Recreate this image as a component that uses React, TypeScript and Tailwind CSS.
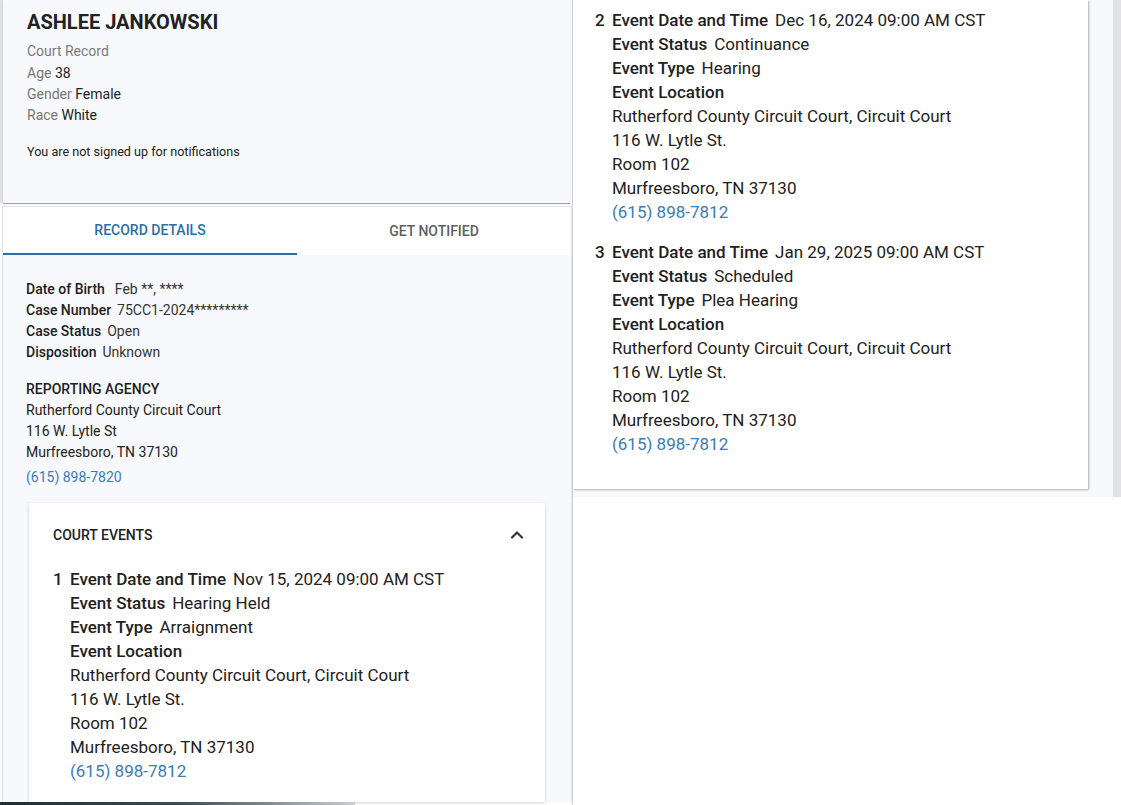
import { ChevronUp } from "lucide-react";

type CourtEvent = {
  n: number;
  date: string;
  status: string;
  type: string;
};

const events: CourtEvent[] = [
  { n: 1, date: "Nov 15, 2024 09:00 AM CST", status: "Hearing Held", type: "Arraignment" },
  { n: 2, date: "Dec 16, 2024 09:00 AM CST", status: "Continuance", type: "Hearing" },
  { n: 3, date: "Jan 29, 2025 09:00 AM CST", status: "Scheduled", type: "Plea Hearing" },
];

function EventItem({ ev }: { ev: CourtEvent }) {
  return (
    <div className="flex text-[17px] leading-[24px] text-[#212121]">
      <div className="w-[17px] shrink-0 font-medium">{ev.n}</div>
      <div className="flex flex-col">
        <div>
          <span className="font-medium">Event Date and Time</span>
          <span className="ml-[7px]">{ev.date}</span>
        </div>
        <div>
          <span className="font-medium">Event Status</span>
          <span className="ml-[7px]">{ev.status}</span>
        </div>
        <div>
          <span className="font-medium">Event Type</span>
          <span className="ml-[7px]">{ev.type}</span>
        </div>
        <div className="font-medium">Event Location</div>
        <div>Rutherford County Circuit Court, Circuit Court</div>
        <div>116 W. Lytle St.</div>
        <div>Room 102</div>
        <div>Murfreesboro, TN 37130</div>
        <div className="text-[#3a7db8]">(615) 898-7812</div>
      </div>
    </div>
  );
}

function DetailRow({ label, value, gap = "ml-[6px]" }: { label: string; value: string; gap?: string }) {
  return (
    <div>
      <span className="font-medium text-[#212121]">{label}</span>
      <span className={`${gap} text-[#333]`}>{value}</span>
    </div>
  );
}

export default function App() {
  return (
    <div className="flex w-[1121px] h-[805px] overflow-hidden bg-white font-['Roboto',sans-serif]">
      {/* left screenshot */}
      <div className="flex w-[572px] shrink-0 flex-col">
        <div className="flex h-[203px] shrink-0">
          <div className="w-[3px] bg-[#e2e2e4]" />
          <div className="w-[567px] bg-[#f8f9fd] px-[24px] pt-[9px] shadow-[0_1px_1px_rgba(0,0,0,0.35)]">
            <h1 className="text-[20px] font-bold leading-[26px] text-[#222]">ASHLEE JANKOWSKI</h1>
            <div className="mt-[6px] text-[14px] leading-[20px] text-[#7a7a7a]">Court Record</div>
            <div className="mt-[2px] text-[14px] leading-[21px]">
              <div>
                <span className="text-[#777]">Age</span> <span className="text-[#212121]">38</span>
              </div>
              <div>
                <span className="text-[#777]">Gender</span> <span className="text-[#212121]">Female</span>
              </div>
              <div>
                <span className="text-[#777]">Race</span> <span className="text-[#212121]">White</span>
              </div>
            </div>
            <div className="mt-[18px] text-[12.6px] leading-[16px] text-[#212121]">You are not signed up for notifications</div>
          </div>
        </div>

        <div className="mt-[3px] ml-[2px] flex min-h-0 flex-1 flex-col border-l border-r border-t border-[#e2e2e4] bg-[#f8f9fd]">
          {/* tabs */}
          <div className="flex h-[48px] shrink-0 bg-white text-[14px] font-medium">
            <div className="flex w-[294px] items-center justify-center border-b-2 border-[#2a6fa8] text-[#2a6fa8]">
              RECORD DETAILS
            </div>
            <div className="flex flex-1 items-center justify-center text-[#5f5f5f]">GET NOTIFIED</div>
          </div>

          <div className="flex min-h-0 flex-1 flex-col px-[23px] pt-[24px] text-[14px] leading-[21px]">
            <DetailRow label="Date of Birth" value="Feb **, ****" gap="ml-[10px]" />
            <DetailRow label="Case Number" value="75CC1-2024*********" />
            <DetailRow label="Case Status" value="Open" />
            <DetailRow label="Disposition" value="Unknown" />

            <div className="mt-[16px] font-medium text-[#212121]">REPORTING AGENCY</div>
            <div className="text-[#212121]">Rutherford County Circuit Court</div>
            <div className="text-[#212121]">116 W. Lytle St</div>
            <div className="text-[#212121]">Murfreesboro, TN 37130</div>
            <div className="mt-[4px] text-[#3a7db8]">(615) 898-7820</div>

            <div className="mt-[15px] ml-[3px] w-[516px] flex-1 bg-white px-[24px] shadow-[0_1px_3px_rgba(0,0,0,0.18)]">
              <div className="flex items-center justify-between pt-[22px]">
                <span className="text-[14px] font-medium leading-[20px] text-[#212121]">COURT EVENTS</span>
                <ChevronUp className="mr-[-6px] h-[20px] w-[20px] text-[#333]" strokeWidth={2.6} />
              </div>
              <div className="mt-[22px]">
                <EventItem ev={events[0]} />
              </div>
            </div>
          </div>
        </div>

        <div className="h-[3px] w-[355px] shrink-0 bg-gradient-to-r from-[#1d2d36] via-[#3b4c56] to-[#c9cfd2]" />
      </div>

      {/* right screenshot */}
      <div className="flex flex-1 flex-col border-l border-[#d6d6d8]">
        <div className="flex h-[497px] shrink-0 bg-[#f8f9fd]">
          <div className="h-[489px] w-[515px] bg-white pl-[22px] pt-[8px] shadow-[1px_1px_2px_rgba(0,0,0,0.3)]">
            <EventItem ev={events[1]} />
            <div className="mt-[16px]">
              <EventItem ev={events[2]} />
            </div>
          </div>
          <div className="flex-1" />
          <div className="w-[8px] bg-[#e2e2e4]" />
        </div>
        <div className="flex-1 bg-white" />
      </div>
    </div>
  );
}
